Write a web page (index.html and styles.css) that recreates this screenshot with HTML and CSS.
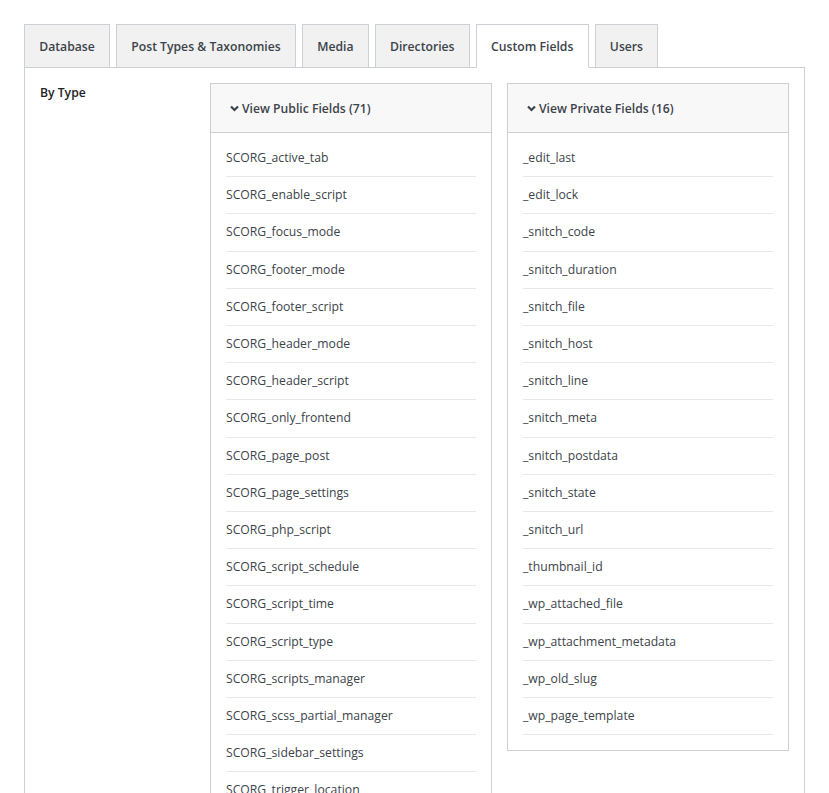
FILE: index.html
```html
<!DOCTYPE html>
<html lang="en">
  <head>
    <meta charset="UTF-8" />
    <title>Custom Fields</title>
    <link rel="stylesheet" href="styles.css">
  </head>
  <body>
    <div class="wrap">
      <nav class="tabs">
        <a class="tab">Database</a>
        <a class="tab">Post Types &amp; Taxonomies</a>
        <a class="tab">Media</a>
        <a class="tab">Directories</a>
        <a class="tab tab-active">Custom Fields</a>
        <a class="tab">Users</a>
      </nav>

      <section class="panel">
        <div class="panel-label">By Type</div>

        <div class="field-box">
          <div class="field-box-head">
            <svg class="chev" width="9" height="7" viewBox="0 0 9 7"><polyline points="1,1.5 4.5,5 8,1.5" fill="none" stroke="#3c434a" stroke-width="2.2" /></svg>
            View Public Fields (71)
          </div>
          <ul class="field-list">
            <li>SCORG_active_tab</li>
            <li>SCORG_enable_script</li>
            <li>SCORG_focus_mode</li>
            <li>SCORG_footer_mode</li>
            <li>SCORG_footer_script</li>
            <li>SCORG_header_mode</li>
            <li>SCORG_header_script</li>
            <li>SCORG_only_frontend</li>
            <li>SCORG_page_post</li>
            <li>SCORG_page_settings</li>
            <li>SCORG_php_script</li>
            <li>SCORG_script_schedule</li>
            <li>SCORG_script_time</li>
            <li>SCORG_script_type</li>
            <li>SCORG_scripts_manager</li>
            <li>SCORG_scss_partial_manager</li>
            <li>SCORG_sidebar_settings</li>
            <li>SCORG_trigger_location</li>
            <li>SCORG_user_roles</li>
            <li>SCORG_where_to_load</li>
          </ul>
        </div>

        <div class="field-box">
          <div class="field-box-head">
            <svg class="chev" width="9" height="7" viewBox="0 0 9 7"><polyline points="1,1.5 4.5,5 8,1.5" fill="none" stroke="#3c434a" stroke-width="2.2" /></svg>
            View Private Fields (16)
          </div>
          <ul class="field-list">
            <li>_edit_last</li>
            <li>_edit_lock</li>
            <li>_snitch_code</li>
            <li>_snitch_duration</li>
            <li>_snitch_file</li>
            <li>_snitch_host</li>
            <li>_snitch_line</li>
            <li>_snitch_meta</li>
            <li>_snitch_postdata</li>
            <li>_snitch_state</li>
            <li>_snitch_url</li>
            <li>_thumbnail_id</li>
            <li>_wp_attached_file</li>
            <li>_wp_attachment_metadata</li>
            <li>_wp_old_slug</li>
            <li>_wp_page_template</li>
          </ul>
        </div>
      </section>
    </div>
  </body>
</html>
```

FILE: styles.css
```css
body {
  margin: 0;
  background: #fff;
  font-family: "Open Sans", "Noto Sans", sans-serif;
  font-size: 12.2px;
  color: #3c434a;
}

.wrap {
  padding: 24px 24px 0 24px;
}

.tabs {
  display: flex;
  gap: 6px;
  position: relative;
  z-index: 1;
  margin-bottom: -1px;
}

.tab {
  display: block;
  height: 41px;
  line-height: 41px;
  padding: 1px 14.25px 0 14.25px;
  border: 1px solid #ccd0d4;
  background: #f1f1f1;
  color: #3c434a;
  font-weight: 600;
}

.tab-active {
  background: #fff;
  border-bottom-color: #fff;
}

.panel {
  display: grid;
  grid-template-columns: 155px 282px 282px;
  column-gap: 15px;
  align-items: start;
  border: 1px solid #ccd0d4;
  border-bottom: none;
  padding: 15px 15px 0 15px;
  min-height: 760px;
}

.panel-label {
  font-weight: 600;
  color: #1d2327;
  line-height: 18px;
  padding-top: 1px;
}

.field-box {
  border: 1px solid #ccd0d4;
  background: #fff;
}

.field-box-head {
  display: flex;
  align-items: center;
  gap: 3px;
  height: 48px;
  padding: 0 19px;
  background: #f8f8f9;
  border-bottom: 1px solid #ccd0d4;
  font-weight: 600;
  color: #3c434a;
}

.chev {
  display: block;
  margin-top: 1px;
}

.field-list {
  list-style: none;
  margin: 0;
  padding: 7px 15px 15px 15px;
}

.field-list li {
  padding: 9px 0;
  line-height: 18.2px;
  border-bottom: 1px solid #e8e8e8;
}
```
